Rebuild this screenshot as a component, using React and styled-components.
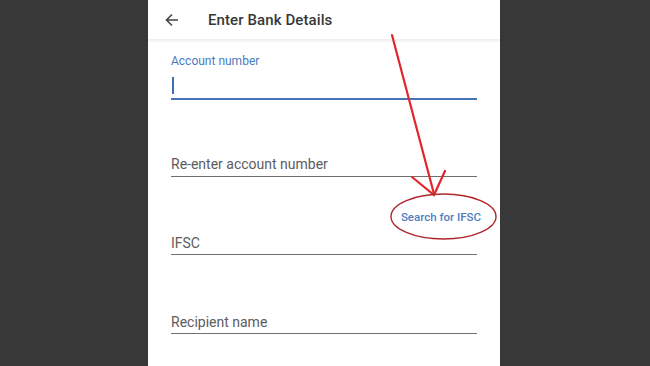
import React from "react";
import styled, { createGlobalStyle } from "styled-components";

const GlobalStyle = createGlobalStyle`
  html, body {
    margin: 0;
    padding: 0;
    background: #383838;
    font-family: Roboto, "Noto Sans", Arial, sans-serif;
  }
`;

const Page = styled.div`
  width: 650px;
  height: 366px;
  overflow: hidden;
  display: flex;
  padding-left: 148px;
  box-sizing: border-box;
`;

const Panel = styled.div`
  position: relative;
  width: 352px;
  height: 366px;
  background: #ffffff;
  display: flex;
  flex-direction: column;
`;

const Header = styled.div`
  height: 40px;
  flex: none;
  display: flex;
  align-items: center;
  padding-left: 16px;
  box-shadow: 0 1px 2px rgba(0, 0, 0, 0.08);
  border-bottom: 1px solid #f0f0f0;
  box-sizing: border-box;
`;

const BackButton = styled.div`
  width: 16px;
  height: 16px;
  display: flex;
  align-items: center;
  justify-content: center;
  margin-right: 28px;
`;

const Title = styled.div`
  font-size: 15px;
  font-weight: 500;
  color: #383838;
  letter-spacing: 0.1px;
`;

const Form = styled.div`
  display: flex;
  flex-direction: column;
  padding: 0 23px;
`;

const Field = styled.div`
  margin-top: ${(p) => p.mt}px;
  border-bottom: ${(p) => (p.active ? "2px solid #4673b8" : "1.5px solid #707070")};
  padding-bottom: ${(p) => p.pb || 0}px;
`;

const FloatLabel = styled.div`
  font-size: 12px;
  line-height: 16px;
  color: #4a7bc0;
`;

const InputArea = styled.div`
  height: 29px;
  display: flex;
  align-items: flex-start;
  padding-top: 8px;
  box-sizing: border-box;
`;

const Caret = styled.div`
  width: 2px;
  height: 17px;
  margin-left: 1px;
  background: #3f6db3;
`;

const Placeholder = styled.div`
  font-size: 14px;
  line-height: 20px;
  color: #5c5c5c;
`;

const LinkRow = styled.div`
  display: flex;
  justify-content: flex-end;
  margin-top: 32px;
  margin-right: -4px;
`;

const SearchLink = styled.div`
  font-size: 11.5px;
  line-height: 16px;
  font-weight: 500;
  color: #4e7fc2;
`;

const Annotation = styled.svg`
  position: absolute;
  left: 0;
  top: 0;
  pointer-events: none;
`;

export default function App() {
  return (
    <>
      <GlobalStyle />
      <Page>
        <Panel>
          <Header>
            <BackButton>
              <svg width="14" height="14" viewBox="0 0 14 14">
                <path
                  d="M13 7H2M7 1.5L1.5 7L7 12.5"
                  stroke="#444"
                  strokeWidth="1.6"
                  fill="none"
                />
              </svg>
            </BackButton>
            <Title>Enter Bank Details</Title>
          </Header>
          <Form>
            <Field active mt={13}>
              <FloatLabel>Account number</FloatLabel>
              <InputArea>
                <Caret />
              </InputArea>
            </Field>
            <Field mt={54} pb={2}>
              <Placeholder>Re-enter account number</Placeholder>
            </Field>
            <LinkRow>
              <SearchLink>Search for IFSC</SearchLink>
            </LinkRow>
            <Field mt={8} pb={1}>
              <Placeholder>IFSC</Placeholder>
            </Field>
            <Field mt={57} pb={1}>
              <Placeholder>Recipient name</Placeholder>
            </Field>
          </Form>
          <Annotation width="352" height="366" viewBox="148 0 352 366">
            <g stroke="#e0262b" strokeWidth="2.2" fill="none" strokeLinecap="round">
              <path d="M392 35L434 194" />
              <path d="M412 177L434 195L445 171" />
            </g>
            <ellipse
              cx="443.5"
              cy="216.5"
              rx="52.5"
              ry="22.5"
              stroke="#b0272b"
              strokeWidth="1.4"
              fill="none"
            />
          </Annotation>
        </Panel>
      </Page>
    </>
  );
}
